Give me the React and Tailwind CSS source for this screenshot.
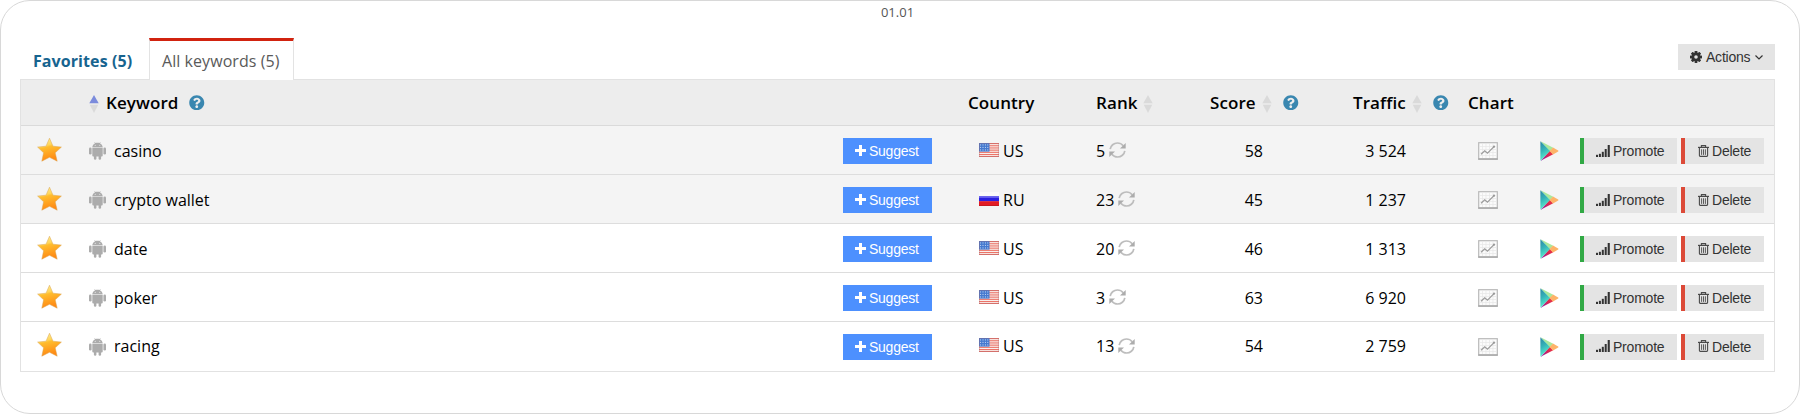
import React from "react";
import { FaQuestionCircle } from "react-icons/fa";

const COLS =
  "grid grid-cols-[64px_758px_125px_128px_114px_144px_114px_73px_39px_194px] items-center";

const Sort = ({ active }) => (
  <svg className="block h-[18px] w-[10px] shrink-0 translate-y-px" viewBox="0 0 10 18">
    <path d="M5 0L9.7 8.2H.3z" fill={active ? "#7b8bdc" : "#dadada"} />
    <path d="M5 18L9.2 9.8H.8z" fill="#dadada" />
  </svg>
);

const Help = () => <FaQuestionCircle className="block h-[15.5px] w-[15.5px] shrink-0 text-[#3a87b0]" />;

const Star = () => (
  <svg className="mb-[3px] ml-4 block h-[26px] w-[25px]" viewBox="0 0 25 26">
    <defs>
      <linearGradient id="star" x1="0" y1="0" x2=".25" y2="1">
        <stop offset="0" stopColor="#fff0a0" />
        <stop offset=".38" stopColor="#ffd65a" />
        <stop offset=".46" stopColor="#ffbd2e" />
        <stop offset="1" stopColor="#ff8a14" />
      </linearGradient>
    </defs>
    <path
      d="M12.5 1.2L16 9.2L24.4 10.1L18.2 15.8L20.2 24.2L12.5 20.3L4.8 24.2L6.6 15.8L.6 10.1L9 9.2Z"
      fill="url(#star)"
      stroke="#d9a250"
      strokeOpacity=".6"
      strokeWidth=".8"
      strokeLinejoin="round"
    />
  </svg>
);

const Android = () => (
  <svg className="block h-[18px] w-[17px] shrink-0" viewBox="0 0 17 18" fill="#acacac">
    <path d="M3.3 5.2C3.5 3.4 4.6 2 6.1 1.3L5.3.2L5.6 0L6.5 1.1C7.8.7 9.2.7 10.5 1.1L11.4 0l.3.2L10.9 1.3C12.4 2 13.5 3.4 13.7 5.2ZM6.2 2.7a.5.5 0 1 0 0 1a.5.5 0 1 0 0-1M10.8 2.7a.5.5 0 1 0 0 1a.5.5 0 1 0 0-1" fillRule="evenodd" />
    <path d="M3.3 5.8h10.4v7.6a1 1 0 0 1-1 1H4.3a1 1 0 0 1-1-1z" />
    <rect x="0" y="5.4" width="2.6" height="7.2" rx="1.3" />
    <rect x="14.4" y="5.4" width="2.6" height="7.2" rx="1.3" />
    <rect x="4.9" y="12" width="2.5" height="5.8" rx="1.2" />
    <rect x="9.6" y="12" width="2.5" height="5.8" rx="1.2" />
  </svg>
);

const FlagUS = () => (
  <svg className="mb-[3px] block h-[14px] w-5" viewBox="0 0 20 14">
    <rect width="20" height="14" fill="#f9efec" />
    {[0, 2.2, 4.4, 6.6, 8.8, 11, 13].map((y) => (
      <rect key={y} y={y} width="20" height="1.1" fill="#ec7468" />
    ))}
    <rect width="10.5" height="8.6" fill="#4579cf" />
    {[1.5, 4, 6.5].map((y) =>
      [1.6, 4, 6.4, 8.8].map((x) => (
        <circle key={`${x}-${y}`} cx={x} cy={y + 0.4} r=".55" fill="#c4d6f4" />
      ))
    )}
    <rect x=".4" y=".4" width="19.2" height="13.2" fill="none" stroke="#a06a70" strokeOpacity=".4" strokeWidth=".8" />
  </svg>
);

const FlagRU = () => (
  <svg className="mb-[3px] block h-[14px] w-5" viewBox="0 0 20 14">
    <rect width="20" height="5" fill="#fafafa" />
    <rect y="4.4" width="20" height="5" fill="#2b20e0" />
    <rect y="9.2" width="20" height="4.8" fill="#e31b23" />
    <rect y="4.4" width="20" height="1.6" fill="#625bef" />
    <rect y="13.2" width="20" height=".8" fill="#c01a20" />
  </svg>
);

const Refresh = () => (
  <svg className="mb-[2px] block h-4 w-[17px]" viewBox="0 0 17 16" fill="none" stroke="#bdbdbd" strokeWidth="1.7">
    <path d="M1.2 7.2C1.7 3.6 4.8 1 8.4 1C10.8 1 12.8 2 14.2 3.8" />
    <path d="M15.8 8.8C15.3 12.4 12.2 15 8.6 15C6.2 15 4.2 14 2.8 12.2" />
    <path d="M16.7 1V6.6H11z" fill="#acacac" stroke="none" />
    <path d="M.3 15V9.4H6z" fill="#acacac" stroke="none" />
  </svg>
);

const Chart = () => (
  <svg className="ml-[10px] block h-[18px] w-5" viewBox="0 0 20 18">
    <rect x=".7" y=".7" width="18.6" height="16.2" fill="#fbfbfb" stroke="#b9b9b9" strokeWidth="1.2" />
    <path d="M2 4.5H18M2 7.5H18M2 10.5H18M2 13.5H18M4.5 2V16M8 2V16M11.5 2V16M15 2V16" stroke="#e6e6e6" strokeWidth=".7" />
    <path d="M.2 17.1H19.8" stroke="#a5a5a5" strokeWidth="1.4" />
    <path d="M3 12.3L6.7 8.8L9.5 11.2L16 4.6" fill="none" stroke="#9d9d9d" strokeWidth="1.3" />
    <circle cx="16" cy="4.7" r="1.1" fill="#999" />
  </svg>
);

const Play = () => (
  <svg className="-ml-px block h-5 w-[19px]" viewBox="0 0 19 20">
    <defs>
      <linearGradient id="play" x1="0" y1="0" x2=".3" y2="1">
        <stop offset="0" stopColor="#2a86a5" />
        <stop offset=".5" stopColor="#35b5b8" />
        <stop offset="1" stopColor="#5ff0cf" />
      </linearGradient>
      <linearGradient id="playRed" x1="0" y1="1" x2="1" y2="0">
        <stop offset="0" stopColor="#8a1fb5" />
        <stop offset=".6" stopColor="#dd2450" />
        <stop offset="1" stopColor="#f0483c" />
      </linearGradient>
    </defs>
    <path d="M.6.3L13.2 6.7L9.8 10.2Z" fill="#a9e89b" />
    <path d="M.6 19.7L13.2 13.3L9.8 9.8Z" fill="url(#playRed)" />
    <path d="M13 6.5L18.2 9.5Q18.8 10 18.2 10.5L13 13.5L9.6 10Z" fill="#fdb368" />
    <path d="M.4.3L10 10L.4 19.7Z" fill="url(#play)" />
  </svg>
);

const Bars = () => (
  <svg className="mb-px block h-3 w-[14px]" viewBox="0 0 14 12" fill="#333">
    <rect x="0" y="9.8" width="2" height="2.2" />
    <rect x="2.9" y="8.8" width="2" height="3.2" />
    <rect x="5.8" y="6.8" width="2" height="5.2" />
    <rect x="8.7" y="4" width="2" height="8" />
    <rect x="11.7" y="0" width="2.1" height="12" />
  </svg>
);

const Trash = () => (
  <svg className="mb-px block h-3 w-[11px]" viewBox="0 0 11 12" fill="none" stroke="#4a4a4a">
    <path d="M0 2.4H11" strokeWidth="1.2" />
    <path d="M3.4 2.2V.6H7.6V2.2" strokeWidth="1.1" />
    <path d="M1.4 2.6V10.6Q1.4 11.4 2.2 11.4H8.8Q9.6 11.4 9.6 10.6V2.6" strokeWidth="1.1" />
    <path d="M3.6 4.3V9.9M5.5 4.3V9.9M7.4 4.3V9.9" strokeWidth=".9" />
  </svg>
);

const Gear = () => (
  <svg className="block h-3 w-3" viewBox="-6 -6 12 12" fill="#333">
    {[0, 45, 90, 135].map((a) => (
      <rect key={a} x="-1.4" y="-6" width="2.8" height="12" rx=".4" transform={`rotate(${a})`} />
    ))}
    <path d="M0-4.4A4.4 4.4 0 1 0 0 4.4A4.4 4.4 0 1 0 0-4.4" />
    <circle r="1.8" fill="#e4e4e4" />
  </svg>
);

const rows = [
  ["casino", "US", "5", "58", "3 524"],
  ["crypto wallet", "RU", "23", "45", "1 237"],
  ["date", "US", "20", "46", "1 313"],
  ["poker", "US", "3", "63", "6 920"],
  ["racing", "US", "13", "54", "2 759"],
];

const BTN = "flex h-[26px] items-center bg-[#e4e4e4] font-['Liberation_Sans',sans-serif] text-[14px] tracking-[-0.22px] leading-none text-[#333]";

export default function App() {
  return (
    <div className="bg-white">
      <div className="flex h-[414px] w-[1800px] flex-col rounded-[30px] border-[1.5px] border-[#d8d8d8] bg-white font-['Open_Sans',sans-serif] text-[16px] text-black">
        <div className="flex h-[37px] justify-center pr-[5px] pt-[2px] text-[13px] leading-[18px] text-[#555]">01.01</div>
        <div className="ml-[19px] flex h-[41px] w-[1755px] justify-between">
          <div className="flex">
            <div className="w-[129px] pl-[13px] pt-[12px] text-[16px] font-bold leading-[22px] tracking-[0.08px] text-[#17648f]">
              <span className="whitespace-nowrap">Favorites (5)</span>
            </div>
            <div className="relative z-10 h-[42px] w-[145px] border-x border-t-[3px] border-x-[#e3e3e3] border-t-[#d1230f] bg-white pl-[12px] pt-[9px] text-[16px] leading-[22px] tracking-[0.06px] text-[#5a5a5a]">
              <span className="whitespace-nowrap">All keywords (5)</span>
            </div>
          </div>
          <div className={`${BTN} mt-[6px] w-[97px] pl-[12px]`}>
            <Gear />
            <span className="ml-[4px]">Actions</span>
            <svg className="ml-[5px] h-[5px] w-2" viewBox="0 0 8 5" fill="none" stroke="#333" strokeWidth="1.2">
              <path d="M.5.5L4 4L7.5.5" />
            </svg>
          </div>
        </div>
        <div className="ml-[19px] w-[1755px] border border-[#e2e2e2]">
          <div className={`${COLS} h-[46px] border-b border-[#dadada] bg-[#ededed] text-[17px] font-semibold tracking-[0.08px]`}>
            <div />
            <div className="flex items-center pl-[4px]">
              <Sort active />
              <span className="ml-[7px] w-[73px]">Keyword</span>
              <span className="ml-[10px]"><Help /></span>
            </div>
            <div />
            <div>Country</div>
            <div className="flex items-center">
              <span className="w-[47px]">Rank</span>
              <Sort />
            </div>
            <div className="flex items-center">
              <span className="w-[52px]">Score</span>
              <Sort />
              <span className="ml-[11px]"><Help /></span>
            </div>
            <div className="flex items-center">
              <span className="-ml-px w-[59px]">Traffic</span>
              <Sort />
              <span className="ml-[11px]"><Help /></span>
            </div>
            <div>Chart</div>
            <div />
            <div />
          </div>
          {rows.map(([word, country, rank, score, traffic], i) => (
            <div
              key={word}
              className={`${COLS} h-[49px] leading-[23px] ${i < 2 ? "bg-[#f4f4f4]" : "bg-white"} ${i < 4 ? "border-b border-[#dddddd] pt-[2px]" : ""}`}
            >
              <Star />
              <div className="flex items-center pl-[4px]">
                <Android />
                <span className="ml-[8px]">{word}</span>
              </div>
              <div className="flex h-[26px] w-[89px] items-center bg-[#4d90fe] pl-[12px] font-['Liberation_Sans',sans-serif] text-[14px] leading-none tracking-[-0.25px] text-white">
                <svg className="mb-px mr-[3px] h-[11px] w-[11px]" viewBox="0 0 11 11">
                  <path d="M5.5 0V11M0 5.5H11" stroke="#fff" strokeWidth="3" />
                </svg>
                Suggest
              </div>
              <div className="flex items-center pl-[11px]">
                {country === "US" ? <FlagUS /> : <FlagRU />}
                <span className="ml-[4px]">{country}</span>
              </div>
              <div className="flex items-center">
                {rank}
                <span className="ml-[4px]"><Refresh /></span>
              </div>
              <div className="w-[53px] text-right">{score}</div>
              <div className="w-[52px] whitespace-nowrap text-right">{traffic}</div>
              <Chart />
              <Play />
              <div className="flex">
                <div className={`${BTN} w-[97px] border-l-4 border-[#31a945] pl-[12px]`}>
                  <Bars />
                  <span className="ml-[3px]">Promote</span>
                </div>
                <div className={`${BTN} ml-[4px] w-[83px] border-l-4 border-[#dc4a38] pl-[13px]`}>
                  <Trash />
                  <span className="ml-[3px]">Delete</span>
                </div>
              </div>
            </div>
          ))}
        </div>
      </div>
    </div>
  );
}
